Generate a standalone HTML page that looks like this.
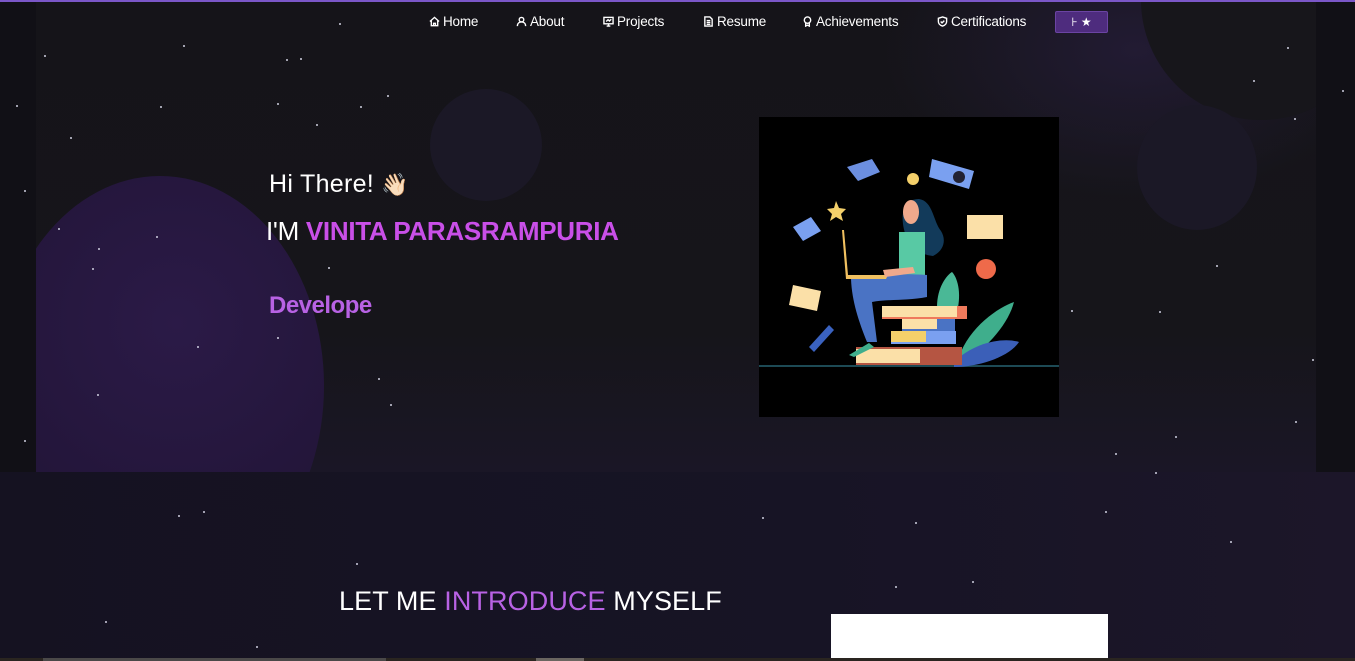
<!DOCTYPE html>
<html><head><meta charset="utf-8"><style>
*{margin:0;padding:0;box-sizing:border-box}
body{width:1355px;height:661px;overflow:hidden;background:#16131f;font-family:"Liberation Sans",sans-serif;position:relative}
.abs{position:absolute}
#hero{left:0;top:0;width:1355px;height:472px;background:#111016}
#inner{left:36px;top:0;width:1280px;height:472px;background:linear-gradient(180deg,#151419 0%,#16151a 70%,#1a1626 100%);overflow:hidden}
#low{left:0;top:472px;width:1355px;height:189px;background:linear-gradient(90deg,#151221 0%,#171425 60%,#1c1629 100%)}
.topline{left:0;top:0;width:1355px;height:2px;background:#7b57c8}
nav a{position:absolute;top:14px;color:#fff;font-size:13.5px;text-decoration:none;letter-spacing:-0.2px;display:flex;align-items:center;gap:3px}
nav svg{width:11px;height:11px;stroke:#fff;fill:none;stroke-width:1.5}
.btn{left:1055px;top:11px;width:53px;height:22px;background:#4e2c7e;border:1px solid #6b44a3;border-radius:2px;color:#fff;font-size:12px;text-align:center;line-height:20px}
.star{position:absolute;width:2px;height:2px;background:#cfcfe0;border-radius:1px}
</style></head><body>
<div id="hero" class="abs"></div>
<div id="inner" class="abs">
  <div class="abs" style="left:850px;top:-100px;width:500px;height:300px;border-radius:50%;background:radial-gradient(closest-side,#221b33,rgba(30,24,45,0))"></div>
  <div class="abs" style="left:1105px;top:-120px;width:240px;height:240px;border-radius:50%;background:#17161b"></div>
  <div class="abs" style="left:-40px;top:176px;width:328px;height:420px;border-radius:50%;background:radial-gradient(circle at 55% 35%,#2b1a47,#221538 70%)"></div>
  <div class="abs" style="left:394px;top:89px;width:112px;height:112px;border-radius:50%;background:#1b1826"></div>
  <div class="abs" style="left:1101px;top:105px;width:120px;height:125px;border-radius:50%;background:#1b1826"></div>
</div>
<div id="low" class="abs"></div>
<div class="abs topline"></div>
<nav>
<a style="left:429px"><svg viewBox="0 0 12 12"><path d="M1 6L6 1.5 11 6M2.5 5v5.5h7V5M5 10.5V8h2v2.5"/></svg>Home</a>
<a style="left:516px"><svg viewBox="0 0 12 12"><circle cx="6" cy="4" r="2.5"/><path d="M1.5 11c0-3 2-4.5 4.5-4.5s4.5 1.5 4.5 4.5"/></svg>About</a>
<a style="left:603px"><svg viewBox="0 0 12 12"><rect x="1" y="1.5" width="10" height="7"/><path d="M6 8.5v2M4 11h4M3.5 6l2-2 1.5 1.5 2-2"/></svg>Projects</a>
<a style="left:703px"><svg viewBox="0 0 12 12"><path d="M2 1h5.5L10 3.5V11H2zM4 5h4M4 7h4M4 9h4"/></svg>Resume</a>
<a style="left:802px"><svg viewBox="0 0 12 12"><circle cx="6" cy="4.5" r="3.5"/><path d="M4 7.5V11l2-1 2 1V7.5"/></svg>Achievements</a>
<a style="left:937px"><svg viewBox="0 0 12 12"><path d="M6 1l4.5 1.5V6c0 2.5-2 4.2-4.5 5-2.5-.8-4.5-2.5-4.5-5V2.5z"/><path d="M4 6l1.5 1.5L8 5"/></svg>Certifications</a>
</nav>
<div class="abs btn">⊦ ★</div>

<div class="abs" style="left:269px;top:170px;color:#fff;font-size:25px;letter-spacing:0.3px">Hi There! <span style="font-size:22px">👋🏻</span></div>
<div class="abs" style="left:266px;top:216px;color:#fff;font-size:26px;letter-spacing:-0.3px">I'M <b style="color:#c94fe8;font-weight:bold">VINITA PARASRAMPURIA</b></div>
<div class="abs" style="left:269px;top:292px;color:#b862e4;font-size:24px;font-weight:bold;letter-spacing:-0.5px">Develope</div>

<svg class="abs" style="left:759px;top:117px" width="300" height="300" viewBox="0 0 300 300">
<rect width="300" height="300" fill="#000"/>
<rect x="0" y="248" width="300" height="2" fill="#1d4a55"/>
<path d="M88 50l25-8 8 13-22 9z" fill="#6c8fe0"/>
<path d="M173 42l42 12-5 18-40-12z" fill="#7aa0f0"/>
<circle cx="200" cy="60" r="6" fill="#223"/>
<circle cx="154" cy="62" r="6" fill="#f4d06a"/>
<path d="M77 84l3 7 7 1-5 5 2 7-7-4-6 4 2-7-5-5 7-1z" fill="#f4d06a"/>
<path d="M34 110l18-10 10 14-18 10z" fill="#7aa0f0"/>
<path d="M208 98h36v24h-36z" fill="#fbe0a8"/>
<circle cx="227" cy="152" r="10" fill="#ef6a4a"/>
<path d="M34 168l28 6-4 20-28-6z" fill="#fbe0a8"/>
<path d="M50 230l20-22 5 5-20 22z" fill="#3a62c0"/>
<path d="M178 190c0-20 10-32 15-35 5 5 10 20 5 40z" fill="#4ab896"/>
<path d="M200 240c10-30 40-50 55-55-5 20-25 45-50 60z" fill="#3fae8c"/>
<path d="M195 245c20-20 50-25 65-20-10 15-40 25-65 25z" fill="#3b5fb8"/>
<path d="M160 82c-12 0-18 10-16 25 2 15 10 30 30 32 10-5 14-15 8-25-8-10-8-30-22-32z" fill="#123a5a"/>
<ellipse cx="152" cy="95" rx="8" ry="12" fill="#f0a98c"/>
<path d="M140 115h26v48h-26z" fill="#58c9a4"/>
<path d="M92 162c20-4 50-6 76-4v22c-20 4-40 2-55 5l5 40h-10c-8-20-15-40-16-63z" fill="#4a73c4"/>
<path d="M85 113l4 45h40l-2 4H87l-4-49z" fill="#f0c060"/>
<path d="M124 153l30-3 2 6-30 4z" fill="#f0a98c"/>
<path d="M123 189h85v13h-85z" fill="#ef7a5c"/><path d="M123 189h75v11h-75z" fill="#fbe0a8"/>
<path d="M143 202h53v12h-53z" fill="#4a73c4"/><path d="M143 202h35v10h-35z" fill="#fbe0a8"/>
<path d="M132 214h65v13h-65z" fill="#7aa0f0"/><path d="M132 214h35v11h-35z" fill="#f4d06a"/>
<path d="M97 230h106v18H97z" fill="#b55542"/><path d="M97 232h64v14H97z" fill="#fbe0a8"/>
<path d="M90 238l20-12 5 4-20 10z" fill="#3fae8c"/>
</svg>

<div class="abs" style="left:339px;top:586px;font-size:27px;color:#fff;letter-spacing:0.1px">LET ME <span style="color:#b862e4">INTRODUCE</span> MYSELF</div>
<div class="abs" style="left:831px;top:614px;width:277px;height:44px;background:#fff"></div>
<div class="abs" style="left:0;top:658px;width:1355px;height:3px;background:#2a2520"></div>
<div class="abs" style="left:43px;top:658px;width:343px;height:3px;background:#4a4848"></div>
<div class="abs" style="left:536px;top:658px;width:48px;height:3px;background:#6a6560"></div>

<div class="star" style="left:16px;top:105px"></div><div class="star" style="left:44px;top:55px"></div><div class="star" style="left:183px;top:45px"></div><div class="star" style="left:160px;top:106px"></div><div class="star" style="left:70px;top:137px"></div><div class="star" style="left:24px;top:190px"></div><div class="star" style="left:58px;top:228px"></div><div class="star" style="left:156px;top:236px"></div><div class="star" style="left:98px;top:248px"></div><div class="star" style="left:92px;top:268px"></div><div class="star" style="left:197px;top:346px"></div><div class="star" style="left:97px;top:394px"></div><div class="star" style="left:24px;top:440px"></div><div class="star" style="left:300px;top:58px"></div><div class="star" style="left:286px;top:59px"></div><div class="star" style="left:339px;top:23px"></div><div class="star" style="left:316px;top:124px"></div><div class="star" style="left:277px;top:103px"></div><div class="star" style="left:387px;top:95px"></div><div class="star" style="left:360px;top:106px"></div><div class="star" style="left:328px;top:267px"></div><div class="star" style="left:277px;top:337px"></div><div class="star" style="left:378px;top:378px"></div><div class="star" style="left:390px;top:404px"></div><div class="star" style="left:1287px;top:47px"></div><div class="star" style="left:1253px;top:80px"></div><div class="star" style="left:1294px;top:118px"></div><div class="star" style="left:1216px;top:265px"></div><div class="star" style="left:1312px;top:359px"></div><div class="star" style="left:1295px;top:421px"></div><div class="star" style="left:1175px;top:436px"></div><div class="star" style="left:1115px;top:453px"></div><div class="star" style="left:1071px;top:310px"></div><div class="star" style="left:1159px;top:311px"></div><div class="star" style="left:1342px;top:90px"></div><div class="star" style="left:203px;top:511px"></div><div class="star" style="left:178px;top:515px"></div><div class="star" style="left:356px;top:563px"></div><div class="star" style="left:1105px;top:511px"></div><div class="star" style="left:1230px;top:541px"></div><div class="star" style="left:972px;top:581px"></div><div class="star" style="left:915px;top:522px"></div><div class="star" style="left:762px;top:517px"></div><div class="star" style="left:256px;top:646px"></div><div class="star" style="left:105px;top:621px"></div><div class="star" style="left:895px;top:586px"></div><div class="star" style="left:1155px;top:472px"></div>
</body></html>
